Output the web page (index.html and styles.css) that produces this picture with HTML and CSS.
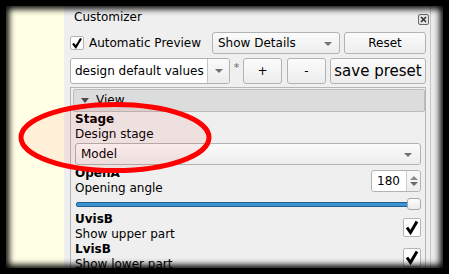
FILE: index.html
```html
<!DOCTYPE html>
<html lang="en">
<head>
  <meta charset="UTF-8">
  <title>Customizer</title>
  <link rel="stylesheet" href="styles.css">
</head>
<body>
  <div class="screen">
    <div class="editor"></div>

    <div class="dock">
      <div class="titlebar">
        <span>Customizer</span>
        <svg class="close" width="11" height="11" viewBox="0 0 11 11">
          <rect x="0.5" y="0.5" width="10" height="10" rx="1.5" fill="#e4e4e4" stroke="#6a6a6a"/>
          <path d="M3 3 L8 8 M8 3 L3 8" stroke="#333" stroke-width="1.6"/>
        </svg>
      </div>

      <div class="row-top">
        <label class="auto">
          <span class="tick small">
            <svg width="12" height="12" viewBox="0 0 12 12"><path d="M2 6.5 L4.8 10 L10 1.5" fill="none" stroke="#000" stroke-width="2.2"/></svg>
          </span>
          Automatic Preview
        </label>
        <div class="combo">Show Details<span class="arrow"></span></div>
        <button class="btn">Reset</button>
      </div>

      <div class="row-presets">
        <div class="combo editable">
          <span class="field">design default values</span>
          <span class="drop"><span class="arrow"></span></span>
        </div>
        <span class="star">*</span>
        <button class="btn">+</button>
        <button class="btn minus">-</button>
        <button class="btn big">save preset</button>
      </div>

      <div class="scroll">
        <div class="group-head"><span class="tri"></span>View</div>

        <div class="param">
          <div class="name">Stage</div>
          <div class="desc">Design stage</div>
          <div class="combo wide">Model<span class="arrow"></span></div>
        </div>

        <div class="param split">
          <div class="labels">
            <div class="name">OpenA</div>
            <div class="desc">Opening angle</div>
          </div>
          <div class="spin">
            <span class="value">180</span>
            <span class="steps"><span class="up"></span><span class="down"></span></span>
          </div>
        </div>
        <div class="slider"><div class="groove"></div><div class="handle"></div></div>

        <div class="param split">
          <div class="labels">
            <div class="name">UvisB</div>
            <div class="desc">Show upper part</div>
          </div>
          <span class="tick">
            <svg width="14" height="15" viewBox="0 0 14 15"><path d="M2 7.5 L5.5 12.5 L12 1.5" fill="none" stroke="#000" stroke-width="3"/></svg>
          </span>
        </div>

        <div class="param split">
          <div class="labels">
            <div class="name">LvisB</div>
            <div class="desc">Show lower part</div>
          </div>
          <span class="tick">
            <svg width="14" height="15" viewBox="0 0 14 15"><path d="M2 7.5 L5.5 12.5 L12 1.5" fill="none" stroke="#000" stroke-width="3"/></svg>
          </span>
        </div>
      </div>
    </div>

    <div class="gutter"></div>

    <svg class="mark" width="437" height="262" viewBox="0 0 437 262">
      <ellipse cx="109" cy="131.5" rx="94" ry="33" fill="rgba(255,0,0,0.06)" stroke="#ff0000" stroke-width="5"/>
    </svg>
    <div class="shade"></div>
  </div>
</body>
</html>
```

FILE: styles.css
```css
* {
  box-sizing: border-box;
}
html, body {
  margin: 0;
  background: #000;
  width: 449px;
  height: 274px;
  overflow: hidden;
}
body {
  font-family: "DejaVu Sans", "Liberation Sans", sans-serif;
  font-size: 12px;
  line-height: 15px;
  color: #000;
}
.screen {
  position: relative;
  margin: 6px;
  height: 262px;
  display: flex;
  overflow: hidden;
  background: #efefef;
}
.editor {
  width: 58px;
  flex: none;
  background: #ffffe5;
}
.dock {
  width: 367px;
  flex: none;
  padding: 4px 4px 0 6px;
  border-right: 1px solid #c4c4c4;
  background: #efefef;
}
.gutter {
  flex: 1;
  background: #ececec;
}

/* title */
.titlebar {
  display: flex;
  justify-content: space-between;
  align-items: center;
  height: 15px;
  padding-left: 4px;
}
.close {
  margin-right: -3px;
  margin-top: 3px;
}

/* buttons and combos */
.btn, .combo {
  font: inherit;
  color: #000;
  height: 22px;
  border: 1px solid #b2b2b2;
  border-radius: 3px;
  background: linear-gradient(#fbfbfb, #ededed);
  padding: 0;
}
.combo {
  position: relative;
  display: flex;
  align-items: center;
  padding-left: 5px;
}
.arrow {
  position: absolute;
  right: 7px;
  top: 9px;
  border-left: 4px solid transparent;
  border-right: 4px solid transparent;
  border-top: 4px solid #707070;
}

.row-top {
  display: grid;
  grid-template-columns: 138px 128px 82px;
  gap: 4px;
  margin-top: 7px;
  height: 22px;
}
.auto {
  display: flex;
  align-items: center;
  gap: 5px;
}
.tick {
  display: flex;
  align-items: center;
  justify-content: center;
  width: 18px;
  height: 19px;
  background: #fff;
  border: 1px solid #b4b4b4;
  border-radius: 2px;
}
.tick.small {
  width: 14px;
  height: 14px;
}

.row-presets {
  display: flex;
  margin-top: 4px;
  height: 26px;
}
.row-presets .btn,
.row-presets .combo {
  height: 26px;
}
.editable {
  width: 160px;
  padding: 0;
  background: #fff;
}
.field {
  flex: 1;
  padding-left: 4px;
}
.drop {
  position: relative;
  width: 22px;
  height: 100%;
  border-left: 1px solid #c4c4c4;
  background: linear-gradient(#fafafa, #ececec);
  border-radius: 0 3px 3px 0;
}
.drop .arrow {
  right: 6px;
  top: 10px;
}
.star {
  width: 13px;
  text-align: center;
  color: #666;
  font-size: 11px;
  line-height: 20px;
}
.row-presets .btn {
  width: 39px;
}
.row-presets .minus {
  margin-left: 5px;
}
.row-presets .big {
  width: 96px;
  margin-left: 4px;
  font-size: 15px;
}

/* parameter area */
.scroll {
  margin-top: 3px;
  height: 200px;
  border: 1px solid #b6b6b6;
  border-bottom: none;
  padding: 1px 0 0 2px;
}
.group-head {
  display: flex;
  align-items: center;
  height: 23px;
  padding-left: 7px;
  background: #dcdcdc;
  border: 1px solid #bcbcbc;
  border-radius: 2px;
}
.tri {
  width: 0;
  height: 0;
  border-left: 4px solid transparent;
  border-right: 4px solid transparent;
  border-top: 5px solid #4a4a4a;
  margin-right: 7px;
}
.param {
  padding: 0 4px 0 2px;
}
.split {
  display: flex;
  align-items: center;
  justify-content: space-between;
}
.name {
  font-weight: bold;
}
.wide {
  margin: 1px 0 1px;
  padding-left: 5px;
}
.wide .arrow {
  right: 8px;
}

.spin {
  display: flex;
  width: 50px;
  height: 22px;
  background: #fff;
  border: 1px solid #b4b4b4;
  border-radius: 3px;
}
.value {
  flex: 1;
  text-align: right;
  padding-right: 6px;
  line-height: 20px;
}
.steps {
  width: 14px;
  display: flex;
  flex-direction: column;
  align-items: center;
  justify-content: center;
  gap: 2px;
  border-left: 1px solid #cfcfcf;
  background: linear-gradient(#fafafa, #ececec);
  border-radius: 0 3px 3px 0;
}
.up {
  border-left: 4px solid transparent;
  border-right: 4px solid transparent;
  border-bottom: 4px solid #8a8a8a;
}
.down {
  border-left: 4px solid transparent;
  border-right: 4px solid transparent;
  border-top: 4px solid #6a6a6a;
}

.slider {
  display: flex;
  align-items: center;
  height: 12px;
  margin: 2px 4px 2px 3px;
}
.groove {
  flex: 1;
  height: 5px;
  background: #3c93d4;
  border: 1px solid #22618f;
  border-radius: 2px;
  margin-right: -3px;
}
.handle {
  width: 14px;
  height: 12px;
  background: linear-gradient(#fdfdfd, #ececec);
  border: 1px solid #a8a8a8;
  border-radius: 3px;
}

/* overlays */
.mark {
  position: absolute;
  left: 0;
  top: 0;
}
.shade {
  position: absolute;
  inset: 0;
  box-shadow: inset 0 0 6px 3px #000;
  pointer-events: none;
}
```
